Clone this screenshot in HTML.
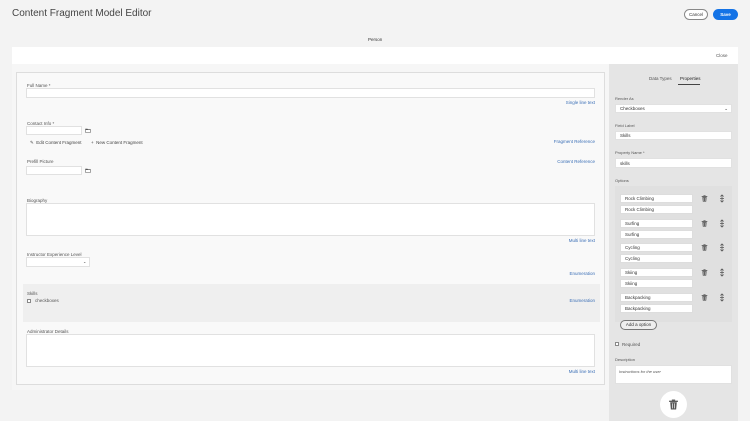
<!DOCTYPE html>
<html><head><style>
*{margin:0;padding:0;box-sizing:border-box}
body{width:750px;height:421px;background:#f3f3f3;font-family:"Liberation Sans",sans-serif;position:relative;overflow:hidden;color:#333}
.a{position:absolute}
.lbl{font-size:4.5px;color:#555}
.link{font-size:4.5px;color:#3b6fb6;text-align:right}
.in{background:#fff;border:1px solid #e1e1e1}
.t{font-size:4.8px;color:#333}
.opt{background:#fff;border:1px solid #ddd;width:73px;height:9px;font-size:4.5px;padding-left:4px;line-height:8px}
</style></head><body>
<svg width="0" height="0" style="position:absolute"><defs>
<symbol id="tr" viewBox="0 0 10 10"><rect x="1" y="1.5" width="8" height="1.2" fill="#555"/><rect x="3.5" y="0.5" width="3" height="1.2" fill="#555"/><path d="M2 3h6l-0.6 6.5h-4.8z" fill="#555"/><path d="M4 4v4.5M6 4v4.5" stroke="#fff" stroke-width="0.6"/></symbol>
<symbol id="mv" viewBox="0 0 10 10"><path d="M5 0.5v9M3 2.5l2-2 2 2M3 7.5l2 2 2-2M2.5 5h5" stroke="#555" stroke-width="0.9" fill="none"/></symbol>
<symbol id="fd" viewBox="0 0 10 8"><path d="M0.5 1h3.5l1 1h4.5v5.5h-9z" fill="#444"/><rect x="1.3" y="3" width="7.4" height="3.8" fill="#fff"/></symbol>
</defs></svg>
<div class="a" style="left:12px;top:8px;font-size:10px;color:#444">Content Fragment Model Editor</div>
<div class="a" style="left:684px;top:9px;width:24px;height:11px;border:1px solid #888;border-radius:6px;background:#fff;font-size:4.5px;text-align:center;line-height:9px">Cancel</div>
<div class="a" style="left:713px;top:9px;width:25px;height:11px;border-radius:6px;background:#1473e6;color:#fff;font-size:4.5px;text-align:center;line-height:11px;font-weight:bold">Save</div>
<div class="a" style="left:368px;top:37px;font-size:4.5px;color:#333">Person</div>
<div class="a" style="left:12px;top:47px;width:726px;height:17px;background:#fff"></div>
<div class="a" style="left:716px;top:53px;font-size:4.5px;color:#555">Close</div>
<div class="a" style="left:12px;top:64px;width:597px;height:326px;background:#f6f6f6"></div>
<div class="a" style="left:16px;top:72px;width:589px;height:313px;border:1.5px solid #ddd;background:#f9f9f9"></div>
<div class="a" style="left:609px;top:64px;width:129px;height:357px;background:#e5e5e5"></div>

<div class="a lbl" style="left:27px;top:83px">Full Name *</div>
<div class="a in" style="left:26px;top:88px;width:569px;height:10px"></div>
<div class="a link" style="left:520px;top:100px;width:75px">Single line text</div>

<div class="a lbl" style="left:27px;top:121px">Contact Info *</div>
<div class="a in" style="left:26px;top:126px;width:56px;height:9px"></div>
<svg class="a" style="left:85px;top:128px" width="6" height="5"><use href="#fd"/></svg>
<div class="a lbl" style="left:30px;top:140px;color:#444">✎ &nbsp;Edit Content Fragment</div>
<div class="a lbl" style="left:91px;top:140px;color:#444">+ &nbsp;New Content Fragment</div>
<div class="a link" style="left:520px;top:139px;width:75px">Fragment Reference</div>

<div class="a lbl" style="left:27px;top:159px">Prefill Picture</div>
<div class="a in" style="left:26px;top:166px;width:56px;height:9px"></div>
<svg class="a" style="left:85px;top:168px" width="6" height="5"><use href="#fd"/></svg>
<div class="a link" style="left:520px;top:159px;width:75px">Content Reference</div>

<div class="a lbl" style="left:27px;top:198px">Biography</div>
<div class="a in" style="left:26px;top:203px;width:569px;height:33px"></div>
<div class="a link" style="left:520px;top:238px;width:75px">Multi line text</div>

<div class="a lbl" style="left:27px;top:252px">Instructor Experience Level</div>
<div class="a in" style="left:26px;top:257px;width:64px;height:10px"></div>
<div class="a" style="left:83px;top:259px;font-size:4px">⌄</div>
<div class="a link" style="left:520px;top:271px;width:75px">Enumeration</div>

<div class="a" style="left:23px;top:284px;width:577px;height:38px;background:#efefef"></div>
<div class="a lbl" style="left:27px;top:291px">Skills</div>
<div class="a" style="left:27px;top:299px;width:4px;height:4px;border:1px solid #888;background:#fff"></div>
<div class="a lbl" style="left:35px;top:298px">checkboxes</div>
<div class="a link" style="left:520px;top:298px;width:75px">Enumeration</div>

<div class="a lbl" style="left:27px;top:329px">Administrator Details</div>
<div class="a in" style="left:26px;top:334px;width:569px;height:33px"></div>
<div class="a link" style="left:520px;top:369px;width:75px">Multi line text</div>

<div class="a lbl" style="left:649px;top:76px">Data Types</div>
<div class="a lbl" style="left:680px;top:76px;color:#222">Properties</div>
<div class="a" style="left:678px;top:84px;width:22px;height:1px;background:#444"></div>

<div class="a lbl" style="left:615px;top:96px;font-size:4px">Render As</div>
<div class="a in t" style="left:615px;top:104px;width:117px;height:9px;font-size:4.5px;padding-left:4px;line-height:8px">Checkboxes<span style="float:right;margin-right:3px">⌄</span></div>
<div class="a lbl" style="left:615px;top:123px;font-size:4px">Field Label</div>
<div class="a in t" style="left:615px;top:131px;width:117px;height:9px;font-size:4.5px;padding-left:4px;line-height:8px">Skills</div>
<div class="a lbl" style="left:615px;top:150px;font-size:4px">Property Name *</div>
<div class="a in t" style="left:615px;top:158px;width:117px;height:10px;font-size:4.5px;padding-left:4px;line-height:9px">skills</div>
<div class="a lbl" style="left:615px;top:178px;font-size:4px">Options</div>
<div class="a" style="left:615px;top:186px;width:117px;height:136px;background:#e0e0e0"></div>

<div class="a opt" style="left:620px;top:194px">Rock Climbing</div><div class="a opt" style="left:620px;top:205px">Rock Climbing</div>
<div class="a opt" style="left:620px;top:219px">Surfing</div><div class="a opt" style="left:620px;top:230px">Surfing</div>
<div class="a opt" style="left:620px;top:243px">Cycling</div><div class="a opt" style="left:620px;top:254px">Cycling</div>
<div class="a opt" style="left:620px;top:268px">Skiing</div><div class="a opt" style="left:620px;top:279px">Skiing</div>
<div class="a opt" style="left:620px;top:293px">Backpacking</div><div class="a opt" style="left:620px;top:304px">Backpacking</div>

<svg class="a" style="left:701px;top:195px" width="7" height="7"><use href="#tr"/></svg>
<svg class="a" style="left:701px;top:220px" width="7" height="7"><use href="#tr"/></svg>
<svg class="a" style="left:701px;top:244px" width="7" height="7"><use href="#tr"/></svg>
<svg class="a" style="left:701px;top:269px" width="7" height="7"><use href="#tr"/></svg>
<svg class="a" style="left:701px;top:294px" width="7" height="7"><use href="#tr"/></svg>
<svg class="a" style="left:718px;top:194px" width="8" height="9"><use href="#mv"/></svg>
<svg class="a" style="left:718px;top:219px" width="8" height="9"><use href="#mv"/></svg>
<svg class="a" style="left:718px;top:243px" width="8" height="9"><use href="#mv"/></svg>
<svg class="a" style="left:718px;top:268px" width="8" height="9"><use href="#mv"/></svg>
<svg class="a" style="left:718px;top:293px" width="8" height="9"><use href="#mv"/></svg>
<div class="a" style="left:620px;top:320px;width:37px;height:10px;border:1px solid #777;border-radius:6px;font-size:4.5px;text-align:center;line-height:8px;background:#eee">Add a option</div>

<div class="a" style="left:615px;top:342px;width:4px;height:4px;border:1px solid #888;background:#fff"></div>
<div class="a lbl" style="left:622px;top:342px">Required</div>
<div class="a lbl" style="left:615px;top:357px;font-size:4px">Description</div>
<div class="a in" style="left:615px;top:365px;width:117px;height:19px;font-size:4px;padding:3px;color:#555;font-style:italic">Instructions for the user</div>
<div class="a" style="left:660px;top:391px;width:27px;height:27px;border-radius:50%;background:#fff"></div>
<svg class="a" style="left:668px;top:399px" width="11" height="11"><use href="#tr"/></svg>
</body></html>
